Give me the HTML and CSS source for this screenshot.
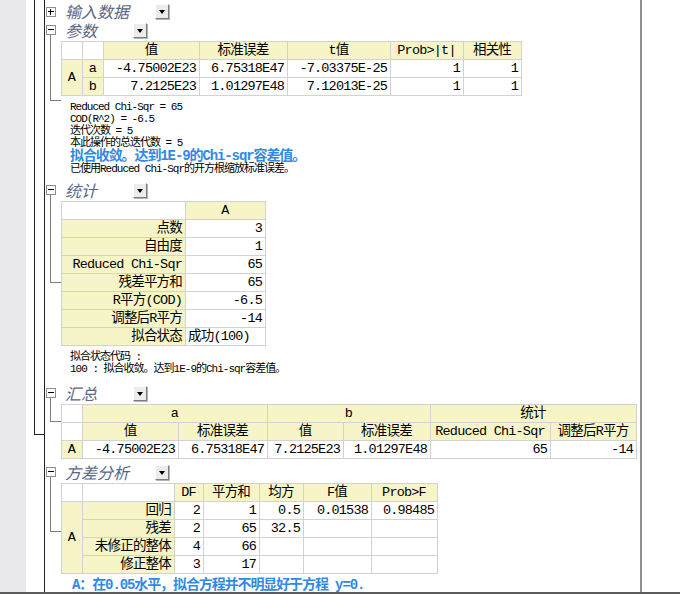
FILE: index.html
```html
<!DOCTYPE html>
<html lang="zh-CN">

<head>
  <meta charset="UTF-8">
  <title>非线性曲线拟合 - 报告</title>
  <link rel="stylesheet" href="styles.css">
</head>

<body>
  <div id="workbook">
    <div class="sidebar"></div>
    <div class="parent-branch"></div>

    <div id="report">
      <!-- 输入数据 (collapsed) -->
      <div class="section">
        <div class="node"><span class="toggle plus"></span></div>
        <div class="section-main">
          <div class="section-head compact">
            <span class="title wide">输入数据</span>
            <span class="drop"></span>
          </div>
        </div>
      </div>

      <!-- 参数 -->
      <div class="section">
        <div class="node">
          <span class="toggle"></span>
          <span class="branch branch-params"></span>
        </div>
        <div class="section-main">
          <div class="section-head">
            <span class="title">参数</span>
            <span class="drop"></span>
          </div>
          <table class="grid params">
            <colgroup>
              <col><col><col><col><col><col><col>
            </colgroup>
            <tr>
              <th class="blank"></th>
              <th class="blank"></th>
              <th>值</th>
              <th>标准误差</th>
              <th>t值</th>
              <th>Prob&gt;|t|</th>
              <th>相关性</th>
            </tr>
            <tr>
              <td class="key center" rowspan="2">A</td>
              <td class="key center">a</td>
              <td>-4.75002E23</td>
              <td>6.75318E47</td>
              <td>-7.03375E-25</td>
              <td>1</td>
              <td>1</td>
            </tr>
            <tr>
              <td class="key center">b</td>
              <td>7.2125E23</td>
              <td>1.01297E48</td>
              <td>7.12013E-25</td>
              <td>1</td>
              <td>1</td>
            </tr>
          </table>
          <div class="notes">
            <div>Reduced Chi-Sqr = 65</div>
            <div>COD(R^2) = -6.5</div>
            <div>迭代次数 = 5</div>
            <div>本此操作的总迭代数 = 5</div>
            <div class="ok">拟合收敛。达到1E-9的Chi-sqr容差值。</div>
            <div>已使用Reduced Chi-Sqr的开方根缩放标准误差。</div>
          </div>
        </div>
      </div>

      <!-- 统计 -->
      <div class="section stats-section">
        <div class="node">
          <span class="toggle"></span>
          <span class="branch branch-stats"></span>
        </div>
        <div class="section-main">
          <div class="section-head">
            <span class="title">统计</span>
            <span class="drop"></span>
          </div>
          <table class="grid stats">
            <colgroup><col><col></colgroup>
            <tr><th class="blank"></th><th>A</th></tr>
            <tr><td class="key">点数</td><td>3</td></tr>
            <tr><td class="key">自由度</td><td>1</td></tr>
            <tr><td class="key">Reduced Chi-Sqr</td><td>65</td></tr>
            <tr><td class="key">残差平方和</td><td>65</td></tr>
            <tr><td class="key">R平方(COD)</td><td>-6.5</td></tr>
            <tr><td class="key">调整后R平方</td><td>-14</td></tr>
            <tr><td class="key">拟合状态</td><td class="left">成功(100)</td></tr>
          </table>
          <div class="notes">
            <div>拟合状态代码 :</div>
            <div>100 : 拟合收敛。达到1E-9的Chi-sqr容差值。</div>
          </div>
        </div>
      </div>

      <!-- 汇总 -->
      <div class="section summary-section">
        <div class="node">
          <span class="toggle"></span>
          <span class="branch branch-summary"></span>
        </div>
        <div class="section-main">
          <div class="section-head">
            <span class="title">汇总</span>
            <span class="drop"></span>
          </div>
          <table class="grid summary">
            <colgroup>
              <col><col><col><col><col><col><col>
            </colgroup>
            <tr>
              <th class="blank"></th>
              <th colspan="2">a</th>
              <th colspan="2">b</th>
              <th colspan="2">统计</th>
            </tr>
            <tr>
              <th class="blank"></th>
              <th>值</th>
              <th>标准误差</th>
              <th>值</th>
              <th>标准误差</th>
              <th>Reduced Chi-Sqr</th>
              <th>调整后R平方</th>
            </tr>
            <tr>
              <td class="key center">A</td>
              <td>-4.75002E23</td>
              <td>6.75318E47</td>
              <td>7.2125E23</td>
              <td>1.01297E48</td>
              <td>65</td>
              <td>-14</td>
            </tr>
          </table>
        </div>
      </div>

      <!-- 方差分析 -->
      <div class="section anova-section">
        <div class="node">
          <span class="toggle"></span>
          <span class="branch branch-anova"></span>
        </div>
        <div class="section-main">
          <div class="section-head">
            <span class="title wide">方差分析</span>
            <span class="drop"></span>
          </div>
          <table class="grid anova">
            <colgroup>
              <col><col><col><col><col><col><col>
            </colgroup>
            <tr>
              <th class="blank"></th>
              <th class="blank"></th>
              <th>DF</th>
              <th>平方和</th>
              <th>均方</th>
              <th>F值</th>
              <th>Prob&gt;F</th>
            </tr>
            <tr>
              <td class="key center" rowspan="4">A</td>
              <td class="key">回归</td>
              <td>2</td>
              <td>1</td>
              <td>0.5</td>
              <td>0.01538</td>
              <td>0.98485</td>
            </tr>
            <tr>
              <td class="key">残差</td>
              <td>2</td>
              <td>65</td>
              <td>32.5</td>
              <td></td>
              <td></td>
            </tr>
            <tr>
              <td class="key">未修正的整体</td>
              <td>4</td>
              <td>66</td>
              <td></td>
              <td></td>
              <td></td>
            </tr>
            <tr>
              <td class="key">修正整体</td>
              <td>3</td>
              <td>17</td>
              <td></td>
              <td></td>
              <td></td>
            </tr>
          </table>
          <div class="verdict">A：在0.05水平，拟合方程并不明显好于方程 y=0.</div>
        </div>
      </div>
    </div>
  </div>
</body>

</html>
```

FILE: styles.css
```css
*,
*::before,
*::after {
  box-sizing: border-box;
}

html,
body {
  margin: 0;
}

body {
  width: 680px;
  height: 594px;
  overflow: hidden;
  background-color: #fff;
  color: #000;
  font-family: "Liberation Mono", "Noto Sans CJK SC", monospace;
}

#workbook {
  display: flex;
  height: 594px;
  border-bottom: 2px solid #5c5c5c;
}

.sidebar {
  flex: none;
  width: 26px;
  background-color: #e8e8ec;
}

/* tree line of the parent node, ends next to 汇总 */
.parent-branch {
  flex: none;
  width: 10px;
  height: 435px;
  margin-left: 8px;
  border-left: 1px solid #222;
  border-bottom: 1px solid #222;
}

#report {
  flex: none;
  width: 598px;
  border-left: 1px solid #222;
  border-right: 2px solid #8e8e8e;
  padding: 2px 0 0 1px;
}

/* ---------- sections ---------- */

.section {
  display: flex;
}

.node {
  flex: none;
  width: 15px;
  display: flex;
  flex-direction: column;
  padding-top: 5px;
}

.toggle {
  position: relative;
  width: 10px;
  height: 10px;
  border: 1px solid #8f8f8f;
  background-color: #fff;
}

.toggle::before {
  content: "";
  position: absolute;
  left: 1px;
  top: 3px;
  width: 6px;
  height: 1px;
  background-color: #000;
}

.toggle.plus::after {
  content: "";
  position: absolute;
  left: 3px;
  top: 1px;
  width: 1px;
  height: 6px;
  background-color: #000;
}

.branch {
  width: 11px;
  margin-left: 4px;
  border-left: 1px solid #7c7c7c;
  border-bottom: 1px solid #7c7c7c;
}

.branch-params { height: 66px; }
.branch-stats { height: 88px; }
.branch-summary { height: 24px; }
.branch-anova { height: 55px; }

.section-main {
  flex: 1;
}

.section-head {
  display: flex;
  align-items: center;
  height: 20px;
}

.section-head.compact {
  height: 18px;
}

.title {
  width: 72px;
  padding-left: 4px;
  font-family: "Noto Sans CJK SC", sans-serif;
  font-size: 16px;
  font-style: italic;
  line-height: 16px;
  color: #5a6686;
}

.title.wide {
  width: 94px;
}

.drop {
  position: relative;
  width: 14px;
  height: 15px;
  border: 1px solid;
  border-color: #fdfdfd #7d7d7d #7d7d7d #fdfdfd;
  background-color: #ececec;
  box-shadow: 1px 1px 0 #b4b4b4;
}

.drop::after {
  content: "";
  position: absolute;
  left: 3px;
  top: 5px;
  border-left: 3.5px solid transparent;
  border-right: 3.5px solid transparent;
  border-top: 4px solid #000;
}

.stats-section { margin-top: 5px; }
.summary-section { margin-top: 8px; }
.anova-section { margin-top: 3px; }

/* ---------- result grids ---------- */

.grid {
  table-layout: fixed;
  border-collapse: collapse;
  border: 1px solid #333;
  margin-top: 1px;
  font-size: 13.5px;
  letter-spacing: -0.8px;
}

.grid tr {
  height: 18px;
}

.grid th,
.grid td {
  padding: 0 3px 0 2px;
  border: 1px solid #d2d2d2;
  line-height: 16px;
  white-space: nowrap;
  overflow: hidden;
  text-align: right;
  font-weight: normal;
}

.grid th {
  text-align: center;
  background-color: #f7f5c8;
}

.grid th.blank {
  background-color: #fff;
}

.grid td.key {
  background-color: #f7f5c8;
}

.grid .center {
  text-align: center;
}

.grid .left {
  text-align: left;
}

.params { width: 460px; }
.params col:nth-child(1) { width: 21px; }
.params col:nth-child(2) { width: 21px; }
.params col:nth-child(3) { width: 96px; }
.params col:nth-child(4) { width: 88px; }
.params col:nth-child(5) { width: 103px; }
.params col:nth-child(6) { width: 73px; }
.params col:nth-child(7) { width: 58px; }

.stats { width: 204px; }
.stats col:nth-child(1) { width: 124px; }
.stats col:nth-child(2) { width: 80px; }

.summary { width: 575px; }
.summary col:nth-child(1) { width: 21px; }
.summary col:nth-child(2) { width: 96px; }
.summary col:nth-child(3) { width: 89px; }
.summary col:nth-child(4) { width: 76px; }
.summary col:nth-child(5) { width: 87px; }
.summary col:nth-child(6) { width: 120px; }
.summary col:nth-child(7) { width: 86px; }

.anova { width: 376px; }
.anova col:nth-child(1) { width: 21px; }
.anova col:nth-child(2) { width: 92px; }
.anova col:nth-child(3) { width: 29px; }
.anova col:nth-child(4) { width: 56px; }
.anova col:nth-child(5) { width: 44px; }
.anova col:nth-child(6) { width: 68px; }
.anova col:nth-child(7) { width: 66px; }

/* ---------- text under the grids ---------- */

.notes {
  margin-top: 5px;
  padding-left: 9px;
  font-size: 11px;
  line-height: 12px;
  letter-spacing: -1px;
}

.notes .ok,
.verdict {
  font-size: 14px;
  font-weight: bold;
  line-height: 14px;
  letter-spacing: -1.1px;
  color: #2f8ae6;
}

.verdict {
  margin-top: 4px;
  padding-left: 11px;
}
```
